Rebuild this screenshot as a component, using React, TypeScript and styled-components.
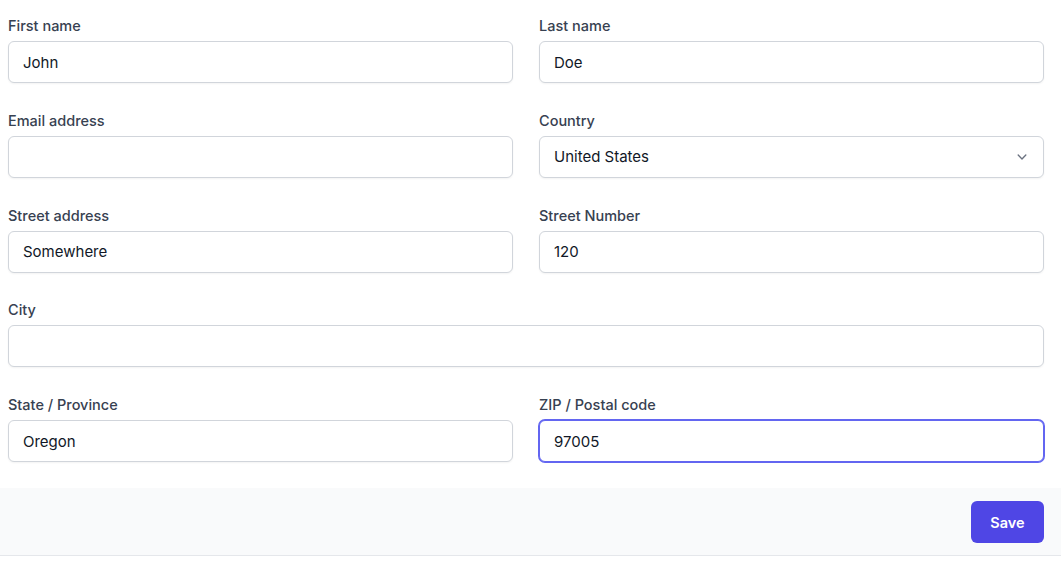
import React from "react";
import styled, { createGlobalStyle } from "styled-components";

const GlobalStyle = createGlobalStyle`
  body {
    margin: 0;
    background: #ffffff;
    font-family: Inter, "Noto Sans", "Liberation Sans", sans-serif;
  }
`;

const FormWrap = styled.form`
  width: 1061px;
`;

const Fields = styled.div`
  display: grid;
  grid-template-columns: 505px 505px;
  column-gap: 26px;
  row-gap: 27.75px;
  padding: 16px 17px 26px 8px;
`;

const Field = styled.div<{ $wide?: boolean }>`
  display: flex;
  flex-direction: column;
  gap: 5px;
  grid-column: ${(p) => (p.$wide ? "1 / -1" : "auto")};
`;

const Label = styled.label`
  font-size: 14.5px;
  line-height: 20px;
  font-weight: 500;
  color: #374151;
`;

const Input = styled.input<{ $focused?: boolean }>`
  box-sizing: border-box;
  height: 42px;
  width: 100%;
  padding: 0 14px;
  font-family: inherit;
  font-size: 15px;
  color: #111827;
  background: #fff;
  border: 1px solid ${(p) => (p.$focused ? "#6366f1" : "#d1d5db")};
  box-shadow: ${(p) =>
    p.$focused ? "0 0 0 1px #6366f1" : "0 1px 2px rgba(0,0,0,0.05)"};
  border-radius: 6px;
  outline: none;
`;

const SelectBox = styled.div`
  position: relative;
`;

const Select = styled.select`
  box-sizing: border-box;
  height: 42px;
  width: 100%;
  padding: 0 40px 0 14px;
  font-family: inherit;
  font-size: 15px;
  color: #111827;
  background: #fff;
  border: 1px solid #d1d5db;
  border-radius: 6px;
  box-shadow: 0 1px 2px rgba(0, 0, 0, 0.05);
  appearance: none;
  outline: none;
`;

const Chevron = styled.svg`
  position: absolute;
  right: 13px;
  top: 12px;
  pointer-events: none;
`;

const Footer = styled.div`
  display: flex;
  justify-content: flex-end;
  background: #f9fafb;
  padding: 13px 17px 12px 8px;
  border-bottom: 1px solid #e5e7eb;
`;

const SaveButton = styled.button`
  width: 73px;
  height: 42px;
  border: none;
  border-radius: 6px;
  background: #4f46e5;
  color: #fff;
  font-family: inherit;
  font-size: 14.5px;
  font-weight: 600;
  cursor: pointer;
`;

const App = () => {
  return (
    <>
      <GlobalStyle />
      <FormWrap onSubmit={(e) => e.preventDefault()}>
        <Fields>
          <Field>
            <Label>First name</Label>
            <Input defaultValue="John" />
          </Field>
          <Field>
            <Label>Last name</Label>
            <Input defaultValue="Doe" />
          </Field>
          <Field>
            <Label>Email address</Label>
            <Input />
          </Field>
          <Field>
            <Label>Country</Label>
            <SelectBox>
              <Select defaultValue="United States">
                <option>United States</option>
                <option>Canada</option>
                <option>Mexico</option>
              </Select>
              <Chevron width="18" height="18" viewBox="0 0 20 20" fill="#6b7280">
                <path
                  fillRule="evenodd"
                  d="M5.23 7.21a.75.75 0 011.06.02L10 11.168l3.71-3.938a.75.75 0 111.08 1.04l-4.25 4.5a.75.75 0 01-1.08 0l-4.25-4.5a.75.75 0 01.02-1.06z"
                  clipRule="evenodd"
                />
              </Chevron>
            </SelectBox>
          </Field>
          <Field>
            <Label>Street address</Label>
            <Input defaultValue="Somewhere" />
          </Field>
          <Field>
            <Label>Street Number</Label>
            <Input defaultValue="120" />
          </Field>
          <Field $wide>
            <Label>City</Label>
            <Input />
          </Field>
          <Field>
            <Label>State / Province</Label>
            <Input defaultValue="Oregon" />
          </Field>
          <Field>
            <Label>ZIP / Postal code</Label>
            <Input $focused defaultValue="97005" />
          </Field>
        </Fields>
        <Footer>
          <SaveButton type="submit">Save</SaveButton>
        </Footer>
      </FormWrap>
    </>
  );
};

export default App;
